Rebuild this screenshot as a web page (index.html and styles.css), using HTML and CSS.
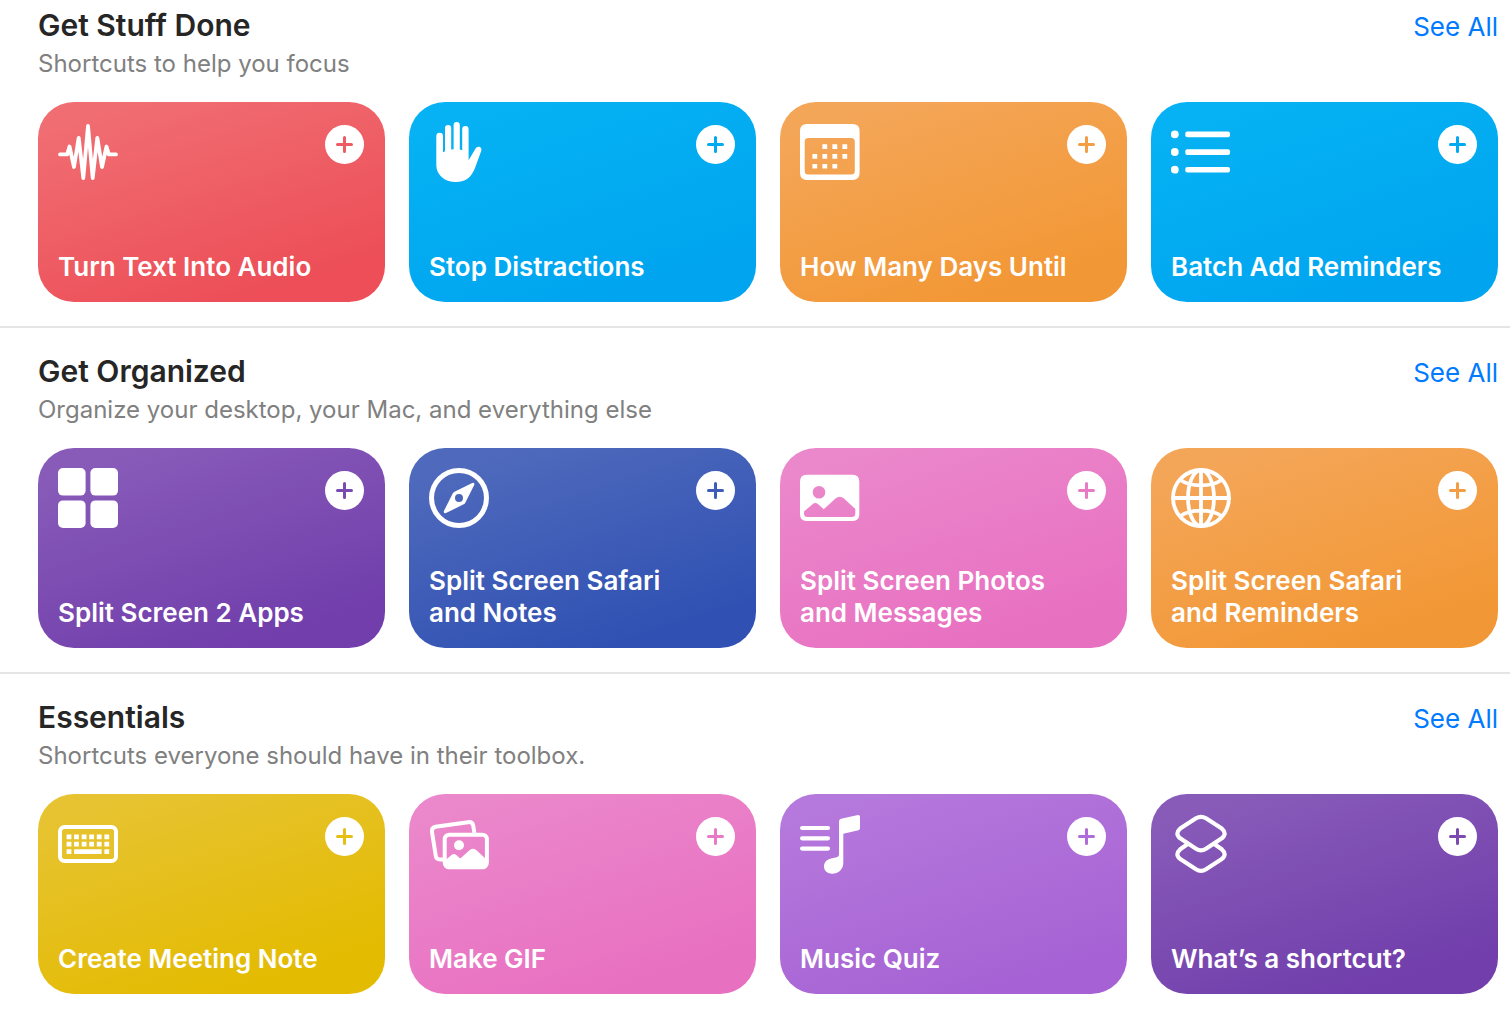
FILE: index.html
```html
<!DOCTYPE html>
<html lang="en">
<head>
    <meta charset="UTF-8">
    <meta name="viewport" content="width=device-width, initial-scale=1.0">
    <title>Shortcuts Gallery</title>
    <link rel="stylesheet" href="styles.css">
</head>
<body>
    <main class="gallery">
        <section class="group">
            <div class="group-header">
                <div>
                    <h2>Get Stuff Done</h2>
                    <p>Shortcuts to help you focus</p>
                </div>
                <a href="#">See All</a>
            </div>
            <div class="cards">
                <article class="card red">
                    <div class="card-top">
                        <svg class="icon line" viewBox="0 0 60 60"><path stroke-width="3.8" d="M2 32.4H9.2L11.5 24.5L16 45L20.7 15.8L25.3 56L30 4L34.7 56L39.3 15.8L44 45L48.5 24.5L50.8 32.4H58"/></svg>
                        <button class="add" aria-label="Add Turn Text Into Audio"><svg viewBox="0 0 19 19"><path d="M9.5 2.5V16.5M2.5 9.5H16.5"/></svg></button>
                    </div>
                    <h3>Turn Text Into Audio</h3>
                </article>
                <article class="card blue">
                    <div class="card-top">
                        <svg class="icon" viewBox="0 0 60 60"><path d="M7.3 14.2A3.3 3.3 0 0 1 14 14.2V30.3L16 29.3V6A3.1 3.1 0 0 1 22.2 6V27.6L24.6 27.2V3.2A3.1 3.1 0 0 1 30.8 3.2V27.6L33.2 28.2V7.2A3.2 3.2 0 0 1 39.6 7.2V38.2L46.3 27C48.3 23 53.6 24.4 52.2 29L46 46C42.4 55 37 60 27 60C15 60 7.3 52.5 7.3 43Z"/></svg>
                        <button class="add" aria-label="Add Stop Distractions"><svg viewBox="0 0 19 19"><path d="M9.5 2.5V16.5M2.5 9.5H16.5"/></svg></button>
                    </div>
                    <h3>Stop Distractions</h3>
                </article>
                <article class="card orange">
                    <div class="card-top">
                        <svg class="icon" viewBox="0 0 60 60">
                            <path fill-rule="evenodd" d="M7 2H52.6Q59.6 2 59.6 9V51Q59.6 58 52.6 58H7Q0 58 0 51V9Q0 2 7 2ZM8.2 16Q4.7 16 4.7 19.5V49Q4.7 52.6 8.2 52.6H51.3Q54.8 52.6 54.8 49V19.5Q54.8 16 51.3 16Z"/>
                            <path d="M22.4 22.3h4.8v4.6h-4.8zM32.4 22.3h4.8v4.6h-4.8zM42.4 22.3h4.8v4.6h-4.8zM12.4 32.1h4.8v4.6h-4.8zM22.4 32.1h4.8v4.6h-4.8zM32.4 32.1h4.8v4.6h-4.8zM42.4 32.1h4.8v4.6h-4.8zM12.4 42h4.8v4.6h-4.8zM22.4 42h4.8v4.6h-4.8zM32.4 42h4.8v4.6h-4.8z"/>
                        </svg>
                        <button class="add" aria-label="Add How Many Days Until"><svg viewBox="0 0 19 19"><path d="M9.5 2.5V16.5M2.5 9.5H16.5"/></svg></button>
                    </div>
                    <h3>How Many Days Until</h3>
                </article>
                <article class="card blue">
                    <div class="card-top">
                        <svg class="icon" viewBox="0 0 60 60">
                            <circle cx="3.8" cy="12.3" r="3.9"/><circle cx="3.8" cy="30" r="3.9"/><circle cx="3.8" cy="47.7" r="3.9"/>
                            <rect x="14.3" y="9.6" width="44.7" height="5.6" rx="2"/><rect x="14.3" y="27.3" width="44.7" height="5.6" rx="2"/><rect x="14.3" y="45" width="44.7" height="5.6" rx="2"/>
                        </svg>
                        <button class="add" aria-label="Add Batch Add Reminders"><svg viewBox="0 0 19 19"><path d="M9.5 2.5V16.5M2.5 9.5H16.5"/></svg></button>
                    </div>
                    <h3>Batch Add Reminders</h3>
                </article>
            </div>
        </section>

        <section class="group">
            <div class="group-header">
                <div>
                    <h2>Get Organized</h2>
                    <p>Organize your desktop, your Mac, and everything else</p>
                </div>
                <a href="#">See All</a>
            </div>
            <div class="cards">
                <article class="card purple">
                    <div class="card-top">
                        <svg class="icon" viewBox="0 0 60 60"><rect width="27.6" height="27.6" rx="5"/><rect x="32.4" width="27.6" height="27.6" rx="5"/><rect y="32.4" width="27.6" height="27.6" rx="5"/><rect x="32.4" y="32.4" width="27.6" height="27.6" rx="5"/></svg>
                        <button class="add" aria-label="Add Split Screen 2 Apps"><svg viewBox="0 0 19 19"><path d="M9.5 2.5V16.5M2.5 9.5H16.5"/></svg></button>
                    </div>
                    <h3>Split Screen 2 Apps</h3>
                </article>
                <article class="card navy">
                    <div class="card-top">
                        <svg class="icon" viewBox="0 0 60 60">
                            <circle cx="30" cy="30" r="27.5" fill="none" stroke="#fff" stroke-width="5"/>
                            <path fill-rule="evenodd" d="M25.5 23.7L43.2 14.9Q46 14.3 45.2 17L36.3 34.7Q35.8 35.8 34.7 36.3L17 45.1Q14.2 45.8 14.9 43L23.7 25.5Q24.3 24.2 25.5 23.7ZM30 26A4 4 0 1 0 30 34A4 4 0 1 0 30 26Z"/>
                        </svg>
                        <button class="add" aria-label="Add Split Screen Safari and Notes"><svg viewBox="0 0 19 19"><path d="M9.5 2.5V16.5M2.5 9.5H16.5"/></svg></button>
                    </div>
                    <h3>Split Screen Safari and Notes</h3>
                </article>
                <article class="card pink">
                    <div class="card-top">
                        <svg class="icon" viewBox="0 0 60 60"><path fill-rule="evenodd" d="M6.5 6.7H52.7Q59.3 6.7 59.3 13.3V46.5Q59.3 53 52.7 53H6.5Q0 53 0 46.5V13.3Q0 6.7 6.5 6.7ZM19 18A6.3 6.3 0 1 0 19 30.6A6.3 6.3 0 1 0 19 18ZM4 43.5L12.5 36.2Q15.3 34 18.2 36.2L23.7 41.3L35.5 30.6Q39.7 27 44 30.6L55.3 41V45.5Q55.3 49 51.8 49H7.5Q4 49 4 45.5Z"/></svg>
                        <button class="add" aria-label="Add Split Screen Photos and Messages"><svg viewBox="0 0 19 19"><path d="M9.5 2.5V16.5M2.5 9.5H16.5"/></svg></button>
                    </div>
                    <h3>Split Screen Photos and Messages</h3>
                </article>
                <article class="card orange">
                    <div class="card-top">
                        <svg class="icon line" viewBox="0 0 60 60">
                            <g stroke-width="3.8"><circle cx="30" cy="30" r="28"/><ellipse cx="30" cy="30" rx="13" ry="28"/><path d="M30 2V58M2 30H58M9.5 12Q17 17.3 30 17.3T50.5 12M9.5 48Q17 42.7 30 42.7T50.5 48"/></g>
                        </svg>
                        <button class="add" aria-label="Add Split Screen Safari and Reminders"><svg viewBox="0 0 19 19"><path d="M9.5 2.5V16.5M2.5 9.5H16.5"/></svg></button>
                    </div>
                    <h3>Split Screen Safari and Reminders</h3>
                </article>
            </div>
        </section>

        <section class="group">
            <div class="group-header">
                <div>
                    <h2>Essentials</h2>
                    <p>Shortcuts everyone should have in their toolbox.</p>
                </div>
                <a href="#">See All</a>
            </div>
            <div class="cards">
                <article class="card yellow">
                    <div class="card-top">
                        <svg class="icon" viewBox="0 0 60 60">
                            <rect x="2" y="13" width="56" height="34" rx="4.5" fill="none" stroke="#fff" stroke-width="4"/>
                            <path d="M8.6 20.4h4.8v4.8h-4.8zM16.1 20.4h4.8v4.8h-4.8zM23.7 20.4h4.8v4.8h-4.8zM31.2 20.4h4.8v4.8h-4.8zM38.8 20.4h4.8v4.8h-4.8zM46.4 20.4h4.8v4.8h-4.8zM8.6 27.8h4.8v4.8h-4.8zM16.1 27.8h4.8v4.8h-4.8zM23.7 27.8h4.8v4.8h-4.8zM31.2 27.8h4.8v4.8h-4.8zM38.8 27.8h4.8v4.8h-4.8zM46.4 27.8h4.8v4.8h-4.8zM8.6 35.2h4.8v4.8h-4.8zM16.1 35.2h27.5v4.8h-27.5zM46.4 35.2h4.8v4.8h-4.8z"/>
                        </svg>
                        <button class="add" aria-label="Add Create Meeting Note"><svg viewBox="0 0 19 19"><path d="M9.5 2.5V16.5M2.5 9.5H16.5"/></svg></button>
                    </div>
                    <h3>Create Meeting Note</h3>
                </article>
                <article class="card pink">
                    <div class="card-top">
                        <svg class="icon" viewBox="0 0 60 60">
                            <path fill="none" stroke="#fff" stroke-width="4" d="M14 45.5H11Q7.4 45.5 6.8 42L3 18Q2.4 13.8 6.5 12.8L39 8.2Q43.3 7.5 44.2 11.5L45.4 19"/>
                            <rect x="15.7" y="20.7" width="42.2" height="32.6" rx="4.5" fill="none" stroke="#fff" stroke-width="4"/>
                            <circle cx="30" cy="31.3" r="5"/>
                            <path d="M16 46.5L22.5 41Q25 39 27.3 41L31.3 44.5L40.8 36Q44 33.5 47.2 36L58 46V50Q58 54 54 54H20Q16 54 16 50Z"/>
                        </svg>
                        <button class="add" aria-label="Add Make GIF"><svg viewBox="0 0 19 19"><path d="M9.5 2.5V16.5M2.5 9.5H16.5"/></svg></button>
                    </div>
                    <h3>Make GIF</h3>
                </article>
                <article class="card violet">
                    <div class="card-top">
                        <svg class="icon" viewBox="0 0 60 60">
                            <path fill="none" stroke="#fff" stroke-width="4.2" stroke-linecap="round" d="M2.1 14H28M2.1 24.3H28M2.1 34.6H28"/>
                            <path d="M39 7.2Q39 5.2 41 4.7L58 1Q60 .8 60 2.8V14.3Q60 15.9 58.4 16.3L43.3 19.7V48.5C43.3 55.5 38.5 59.7 32.2 59.7C27.5 59.7 24 57 24 52.5C24 47.5 27.5 45.1 32 44.2L36.8 43.2Q39 42.7 39 40.6Z"/>
                        </svg>
                        <button class="add" aria-label="Add Music Quiz"><svg viewBox="0 0 19 19"><path d="M9.5 2.5V16.5M2.5 9.5H16.5"/></svg></button>
                    </div>
                    <h3>Music Quiz</h3>
                </article>
                <article class="card purple">
                    <div class="card-top">
                        <svg class="icon line" viewBox="0 0 60 60"><path stroke-width="4.2" d="M25 4.3Q30 1.4 35 4.3L50.8 14.6Q56.5 19.5 50.8 24.3L35 34.8Q30 38 25 34.8L9.2 24.3Q3.5 19.5 9.2 14.6ZM15.7 30.8L9.2 35.3Q3.5 40.3 9.2 45L25 55.3Q30 58.4 35 55.3L50.8 45Q56.5 40.3 50.8 35.3L44.3 30.8"/></svg>
                        <button class="add" aria-label="Add What’s a shortcut?"><svg viewBox="0 0 19 19"><path d="M9.5 2.5V16.5M2.5 9.5H16.5"/></svg></button>
                    </div>
                    <h3>What’s a shortcut?</h3>
                </article>
            </div>
        </section>
    </main>
</body>
</html>
```
FILE: styles.css
```css
* {
    box-sizing: border-box;
}
body {
    margin: 0;
    font-family: Inter, "Liberation Sans", sans-serif;
    background-color: #fff;
    color: #262626;
}
h2, h3, p {
    margin: 0;
}
.group {
    padding: 24px 12px 24px 38px;
    border-bottom: 2px solid #e5e5e5;
}
.group:first-child {
    padding-top: 6px;
}
.group:last-child {
    border-bottom: none;
}
.group-header {
    display: flex;
    justify-content: space-between;
    align-items: flex-start;
    min-height: 96px;
}
.group-header h2 {
    margin-bottom: 2px;
    font-size: 30px;
    font-weight: 600;
    line-height: 38px;
}
.group-header p {
    font-size: 24px;
    line-height: 36px;
    color: #808080;
}
.group-header a {
    font-size: 26px;
    line-height: 42px;
    color: #007aff;
    text-decoration: none;
}
.cards {
    display: grid;
    grid-template-columns: repeat(4, 1fr);
    gap: 24px;
}
.card {
    display: flex;
    flex-direction: column;
    justify-content: space-between;
    min-height: 200px;
    padding: 20px 20px 19px;
    border-radius: 36px;
    background: linear-gradient(162deg, var(--from) 10%, var(--to) 85%);
    color: #fff;
}
.card-top {
    display: flex;
    justify-content: space-between;
    align-items: flex-start;
}
.card h3 {
    max-width: 278px;
    font-size: 26px;
    font-weight: 600;
    line-height: 32px;
}
.icon {
    width: 60px;
    height: 60px;
    fill: #fff;
}
.line {
    fill: none;
    stroke: #fff;
    stroke-linecap: round;
    stroke-linejoin: round;
}
.add {
    display: flex;
    justify-content: center;
    align-items: center;
    width: 39px;
    height: 39px;
    margin: 3px 1px 0 0;
    padding: 0;
    border: none;
    border-radius: 50%;
    background-color: #fff;
    color: var(--plus);
    cursor: pointer;
}
.add svg {
    width: 19px;
    height: 19px;
    fill: none;
    stroke: currentColor;
    stroke-width: 3;
    stroke-linecap: round;
}

/* card colors */
.red {
    --from: #f06d72;
    --to: #ed4e57;
    --plus: #ee5b62;
}
.blue {
    --from: #06b2f3;
    --to: #00a4ef;
    --plus: #00aaf0;
}
.orange {
    --from: #f4a658;
    --to: #f29735;
    --plus: #f39e45;
}
.purple {
    --from: #885bb9;
    --to: #713eab;
    --plus: #7a4ab1;
}
.navy {
    --from: #4f6abc;
    --to: #3051b3;
    --plus: #3e5cb8;
}
.pink {
    --from: #eb87cb;
    --to: #e870c1;
    --plus: #e97bc6;
}
.yellow {
    --from: #e7c331;
    --to: #e3bb00;
    --plus: #e5bf13;
}
.violet {
    --from: #b578dc;
    --to: #a662d4;
    --plus: #ae6dd8;
}
```
